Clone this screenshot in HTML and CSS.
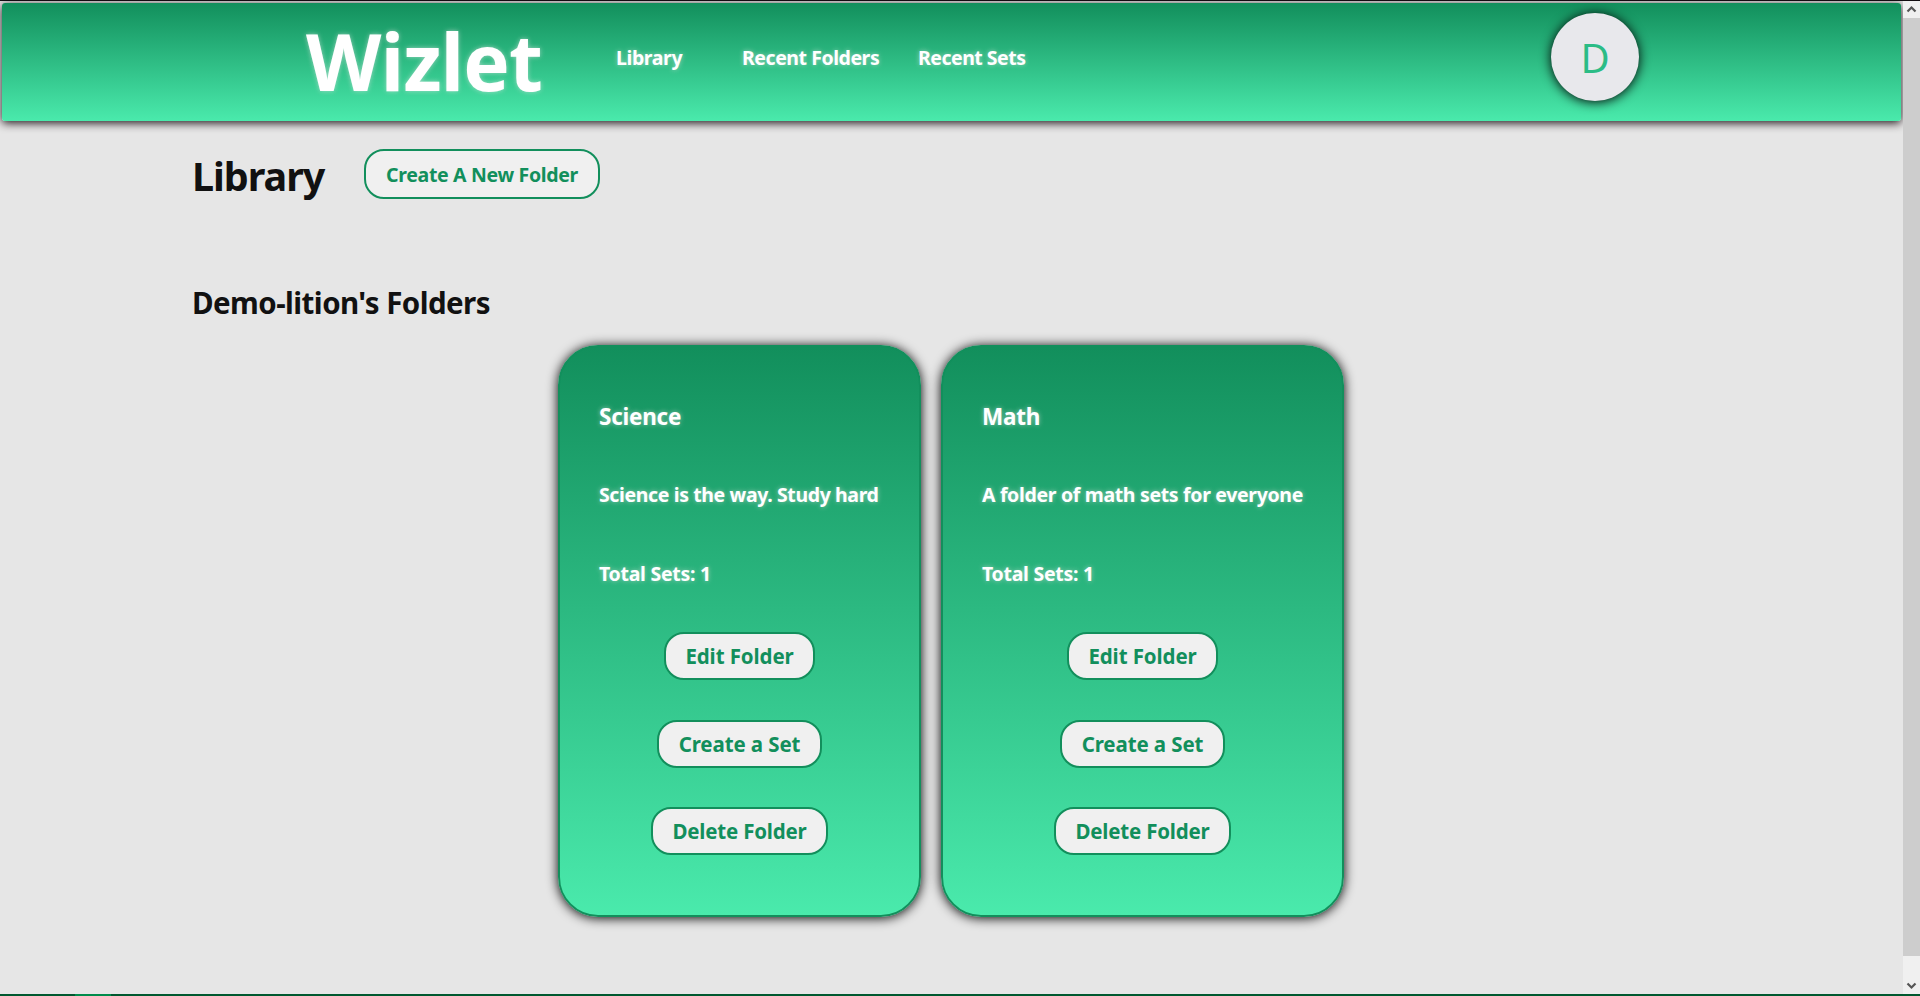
FILE: index.html
```html
<!DOCTYPE html>
<html lang="en">
<head>
<meta charset="utf-8">
<title>Wizlet</title>
<link rel="stylesheet" href="styles.css">
</head>
<body>
<div class="viewport">
  <div class="page">
    <header class="header">
      <a class="brand">Wizlet</a>
      <nav class="nav">
        <a class="nav-library">Library</a>
        <a class="nav-folders">Recent Folders</a>
        <a class="nav-sets">Recent Sets</a>
      </nav>
      <div class="avatar">D</div>
    </header>
    <main>
      <div class="title-row">
        <h1 class="title">Library</h1>
        <button class="btn btn-new">Create A New Folder</button>
      </div>
      <h2 class="subtitle">Demo-lition's Folders</h2>
      <section class="cards">
        <article class="card card-science">
          <h3 class="card-name">Science</h3>
          <p class="card-text card-desc">Science is the way. Study hard</p>
          <p class="card-text card-total">Total Sets: 1</p>
          <div class="actions">
            <button class="btn btn-edit">Edit Folder</button>
            <button class="btn btn-create">Create a Set</button>
            <button class="btn btn-delete">Delete Folder</button>
          </div>
        </article>
        <article class="card card-math">
          <h3 class="card-name">Math</h3>
          <p class="card-text card-desc">A folder of math sets for everyone</p>
          <p class="card-text card-total">Total Sets: 1</p>
          <div class="actions">
            <button class="btn btn-edit">Edit Folder</button>
            <button class="btn btn-create">Create a Set</button>
            <button class="btn btn-delete">Delete Folder</button>
          </div>
        </article>
      </section>
    </main>
  </div>
  <div class="scrollbar">
    <svg class="arrow" viewBox="0 0 17 17"><path d="M4.5 10.5 8.5 6.5l4 4"/></svg>
    <div class="thumb"></div>
    <svg class="arrow arrow-down" viewBox="0 0 17 17"><path d="M4.5 6.5l4 4 4-4"/></svg>
  </div>
</div>
<div class="taskbar"><div class="taskbar-active"></div></div>
</body>
</html>
```
FILE: styles.css
```css
* { box-sizing: border-box; }

body {
  margin: 0;
  height: 996px;
  overflow: hidden;
  background: #e6e6e6;
  color: #111;
  font-family: "Noto Sans", "Open Sans", sans-serif;
}

.viewport {
  display: flex;
  height: 994px;
  border-top: 1px solid #120c10;
}

.page {
  width: 1903px;
  padding-top: 2px;
  overflow: hidden;
}

.header {
  display: flex;
  align-items: flex-start;
  height: 118px;
  margin: 0 2px;
  padding-left: 304px;
  border-radius: 3px;
  background: linear-gradient(#128f5c, #4aeaac);
  box-shadow: 0 2px 10px #1c1216;
  color: #fff;
  font-weight: 700;
  text-shadow: 0 0 5px rgba(229, 229, 229, .6);
}

.brand {
  width: 310px;
  font-size: 78px;
  line-height: 116px;
  letter-spacing: -.8px;
}

.nav {
  display: flex;
  width: 935px;
  font-size: 19.5px;
  line-height: 109px;
  white-space: nowrap;
}

.nav-library { width: 126px; letter-spacing: -.4px; }
.nav-folders { width: 176px; letter-spacing: -.45px; }
.nav-sets { letter-spacing: -.5px; }

.avatar {
  width: 88px;
  height: 88px;
  margin-top: 10px;
  border-radius: 50%;
  background: #e8e8ec;
  box-shadow: 0 1px 12px #000;
  color: #2bbc86;
  font-size: 40px;
  font-weight: 400;
  line-height: 89px;
  text-align: center;
  text-shadow: none;
}

.title-row {
  display: flex;
  align-items: flex-start;
  padding: 25px 0 0 192px;
}

.title {
  width: 172px;
  margin: 0;
  font-size: 39.5px;
  line-height: 60px;
  letter-spacing: -1.05px;
}

.subtitle {
  margin: 77px 0 0 192px;
  font-size: 29.5px;
  line-height: 40px;
  letter-spacing: -.55px;
}

.btn {
  height: 48px;
  padding: 0;
  border: 2px solid #128f5c;
  border-radius: 20px;
  background: #f0f0f0;
  color: #128f5c;
  font-family: inherit;
  font-size: 20.5px;
  font-weight: 700;
  line-height: 44px;
  letter-spacing: -.1px;
  white-space: nowrap;
}

.btn-new {
  width: 236px;
  height: 50px;
  margin-top: 3px;
  padding-top: 1px;
  font-size: 19.5px;
  line-height: 45px;
  letter-spacing: -.33px;
}

.btn-edit { width: 151px; }
.btn-create { width: 165px; }
.btn-delete { width: 177px; letter-spacing: -.2px; }

.cards {
  display: flex;
  justify-content: center;
  gap: 20px;
  margin-top: 22px;
  padding-right: 1px;
}

.card {
  height: 572px;
  padding: 55px 39px 0;
  border: 2px solid #128f5c;
  border-radius: 40px;
  background: linear-gradient(#128f5c, #4aeaac);
  box-shadow: 0 1px 12px #000;
  color: #fff;
  text-shadow: 0 0 5px rgba(229, 229, 229, .6);
  white-space: nowrap;
}

.card-science { width: 363px; }
.card-math { width: 403px; }

.card-name {
  margin: 0 0 48px;
  font-size: 22.5px;
  line-height: 30px;
  letter-spacing: -.25px;
}

.card-text {
  margin: 0;
  font-size: 19.5px;
  font-weight: 700;
  line-height: 30px;
  letter-spacing: -.33px;
}

.card-science .card-desc { letter-spacing: -.38px; }

.card-total { margin-top: 49px; letter-spacing: -.28px; }

.actions {
  display: flex;
  flex-direction: column;
  align-items: center;
  gap: 39.5px;
  margin-top: 43px;
}

.scrollbar {
  display: flex;
  flex-direction: column;
  width: 17px;
  background: #f0f0f0;
}

.arrow {
  width: 17px;
  height: 17px;
  fill: none;
  stroke: #555;
  stroke-width: 2.2;
}

.arrow-down { margin-top: auto; }

.thumb {
  height: 938px;
  background: #cdcdcd;
}

.taskbar {
  height: 2px;
  padding-left: 75px;
  background: #00582f;
}

.taskbar-active {
  width: 36px;
  height: 2px;
  background: #008b4b;
}
```
